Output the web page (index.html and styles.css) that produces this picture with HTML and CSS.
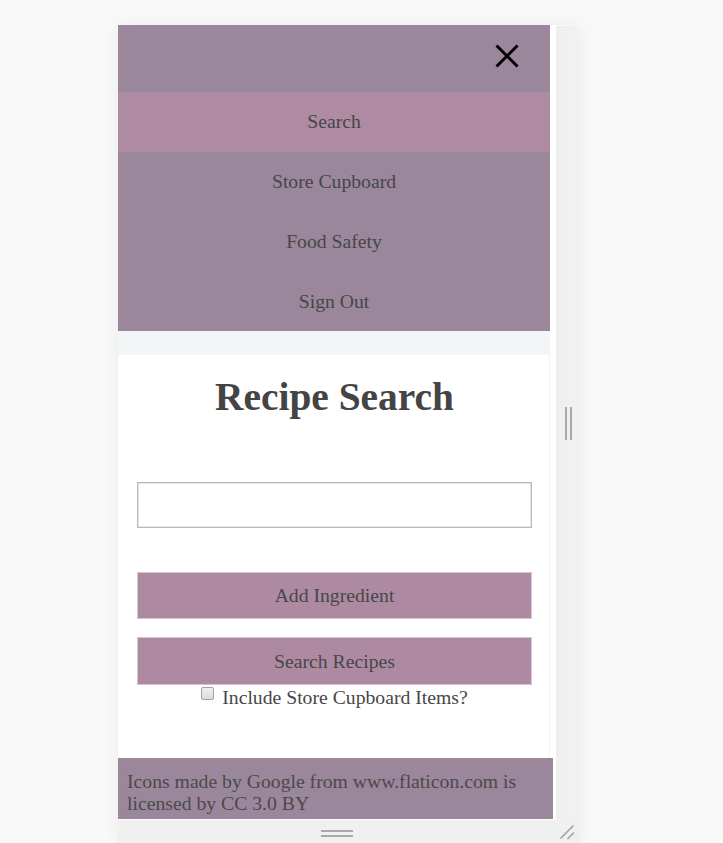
FILE: index.html
```html
<!DOCTYPE html>
<html lang="en">
<head>
<meta charset="utf-8">
<title>Recipe Search</title>
<link rel="stylesheet" href="styles.css">
</head>
<body>
<div class="stage">
  <div class="frame">
    <div class="viewport">
      <nav class="menu">
        <div class="menu-top">
          <button class="close" aria-label="Close menu">
            <svg width="24" height="24" viewBox="0 0 24 24"><path d="M1.5 1.5 L22.5 22.5 M22.5 1.5 L1.5 22.5" stroke="#000" stroke-width="3" fill="none"/></svg>
          </button>
        </div>
        <a class="menu-item active" href="#">Search</a>
        <a class="menu-item" href="#">Store Cupboard</a>
        <a class="menu-item" href="#">Food Safety</a>
        <a class="menu-item" href="#">Sign Out</a>
      </nav>
      <div class="band"></div>
      <main class="content">
        <h1 class="title">Recipe Search</h1>
        <input class="ingredient" type="text" aria-label="Ingredient">
        <button class="btn btn-add">Add Ingredient</button>
        <button class="btn btn-search">Search Recipes</button>
        <label class="check"><input class="check-box" type="checkbox"><span>Include Store Cupboard Items?</span></label>
      </main>
      <footer class="credits">Icons made by Google from www.flaticon.com is licensed by CC 3.0 BY</footer>
    </div>
    <div class="side-handle"><span class="bar"></span><span class="bar"></span></div>
    <div class="bottom-handle">
      <span class="grip"></span>
      <svg class="corner" width="16" height="16" viewBox="0 0 16 16"><path d="M1.5 14.5 L14.5 1.5 M8.5 15 L15 8.5" stroke="#a3a3a3" stroke-width="1.6" fill="none"/></svg>
    </div>
  </div>
</div>
</body>
</html>
```
FILE: styles.css
```css
* { box-sizing: border-box; }
html, body { margin: 0; padding: 0; }
body {
  background: #f9f9f9;
  font-family: "Liberation Serif", "Times New Roman", serif;
  color: #474747;
  width: 723px;
  height: 843px;
  overflow: hidden;
}
.stage {
  padding: 25px 0 0 118px;
}
.frame {
  display: grid;
  grid-template-columns: 438px 24px;
  grid-template-rows: 795px 23px;
  width: 462px;
  box-shadow: 0 0 18px rgba(0, 0, 0, 0.06);
}
.viewport {
  background: #fff;
  display: flex;
  flex-direction: column;
  overflow: hidden;
  padding-bottom: 1px;
}
.menu {
  width: 432px;
  background: #9b879b;
  display: flex;
  flex-direction: column;
}
.menu-top {
  height: 67px;
  display: flex;
  justify-content: flex-end;
  align-items: flex-start;
  padding: 19px 31px 0 0;
}
.close {
  border: 0;
  background: none;
  padding: 0;
  width: 24px;
  height: 24px;
  display: block;
}
.close svg { display: block; }
.menu-item {
  height: 59.75px;
  display: flex;
  align-items: center;
  justify-content: center;
  font-size: 19.7px;
  color: #464646;
  text-decoration: none;
}
.menu-item.active { background: #ae8ba2; }
.band {
  width: 432px;
  height: 24px;
  background: #f3f6f7;
}
.content {
  width: 432px;
  flex: 1;
  display: flex;
  flex-direction: column;
  align-items: center;
  padding-left: 1px;
  box-shadow: inset -1px 0 0 #fbeef0;
}
.title {
  margin: 20px 0 0;
  font-size: 39.4px;
  line-height: 45px;
  font-weight: bold;
  color: #444;
}
.ingredient {
  margin-top: 62px;
  width: 395px;
  height: 46px;
  border: 1px solid #b3bac6;
  box-shadow: inset 0 0 0 1px #e3e6ec;
  background: #fff;
}
.btn {
  width: 395px;
  background: #ae8aa2;
  border: 1px solid #d8c5d1;
  font-family: inherit;
  font-size: 19.7px;
  color: #474747;
  padding: 0;
}
.btn-add { margin-top: 44px; height: 47px; }
.btn-search { margin-top: 18px; height: 48px; }
.check {
  display: flex;
  align-items: flex-start;
  font-size: 19.7px;
  line-height: 22px;
  color: #474747;
  margin-top: 1px;
}
.check-box {
  appearance: none;
  -webkit-appearance: none;
  width: 13px;
  height: 13px;
  margin: 1px 8px 0 0;
  border: 1px solid #a2a2a2;
  border-radius: 2px;
  background: linear-gradient(#f0f0f0, #dadada);
}
.credits {
  width: 435px;
  height: 61px;
  background: #9b879b;
  font-size: 19.7px;
  line-height: 22px;
  padding: 12px 9px 0;
  color: #4a4a4a;
}
.side-handle {
  margin-top: 1px;
  background: linear-gradient(90deg, #eeeeee, #f2f2f2);
  display: flex;
  justify-content: center;
  align-items: center;
  gap: 3px;
}
.side-handle .bar {
  width: 2px;
  height: 33px;
  background: #a9a9a9;
}
.bottom-handle {
  grid-column: 1 / span 2;
  background: #f0f0f0;
  position: relative;
  display: flex;
  justify-content: center;
  padding: 10px 24px 0 0;
}
.grip {
  width: 32px;
  height: 7px;
  border-top: 2px solid #a9a9a9;
  border-bottom: 2px solid #a9a9a9;
}
.corner {
  position: absolute;
  right: 5px;
  bottom: 3px;
}
```
